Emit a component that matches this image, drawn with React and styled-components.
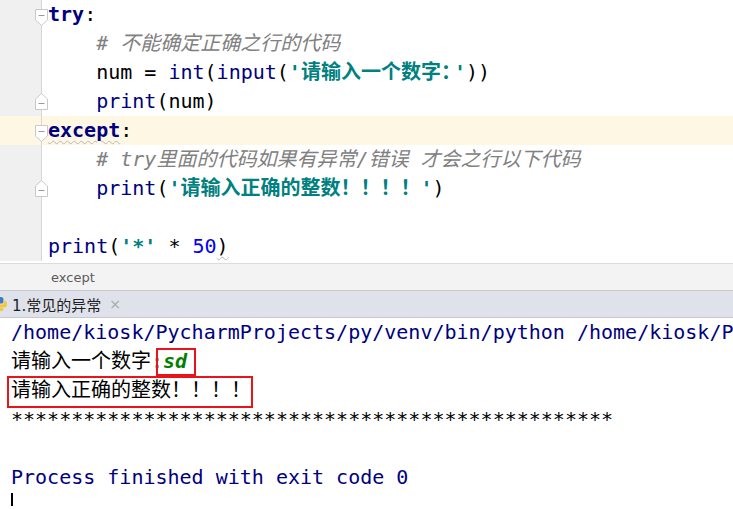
import React from "react";
import styled, { createGlobalStyle } from "styled-components";

const GlobalStyle = createGlobalStyle`
  html, body { margin: 0; padding: 0; background: #ffffff; overflow: hidden; }
  * { box-sizing: border-box; }
`;

const MONO = `"DejaVu Sans Mono", "Noto Sans CJK SC", monospace`;
const UI = `"DejaVu Sans", "Noto Sans CJK SC", sans-serif`;

const Page = styled.div`
  width: 733px;
  height: 509px;
  display: flex;
  flex-direction: column;
  overflow: hidden;
  background: #fff;
`;

const Editor = styled.div`
  height: 263px;
  display: flex;
  flex-direction: column;
  flex: none;
`;

const Row = styled.div`
  display: flex;
  height: 29px;
  background: ${(p) => (p.$active ? "#fdf7e3" : "transparent")};
`;

const Gutter = styled.div`
  width: 42px;
  flex: none;
  position: relative;
  background: ${(p) => (p.$active ? "#fdf7e3" : "#f0f0f0")};
  border-right: 1px solid #d6d6d6;
`;

const Code = styled.div`
  padding-left: 6px;
  font-family: ${MONO};
  font-size: 20px;
  line-height: 29px;
  white-space: pre;
  color: #000;
`;

const Kw = styled.span`
  color: #000080;
  font-weight: bold;
`;
const Squiggle = styled.span`
  text-decoration: underline wavy #b8b8b8 1px;
  text-underline-offset: 3px;
`;
const Builtin = styled.span`
  color: #000080;
`;
const Str = styled.span`
  color: #008080;
  font-weight: bold;
`;
const Narrow = styled.span`
  letter-spacing: -7px;
`;
const Num = styled.span`
  color: #0000ff;
`;
const Comment = styled.span`
  color: #808080;
  font-style: italic;
`;

const Marker = styled.svg`
  position: absolute;
  right: -7px;
  top: ${(p) => p.$top}px;
`;

const FoldMarker = ({ end, top }) => (
  <Marker $top={top} width="13" height="17" viewBox="0 0 13 17">
    {end ? (
      <path d="M0.5 16.5 V6 L6.5 0.5 L12.5 6 V16.5 Z" fill="#fff" stroke="#c9c9c9" />
    ) : (
      <path d="M0.5 0.5 H12.5 V11 L6.5 16.5 L0.5 11 Z" fill="#fff" stroke="#c9c9c9" />
    )}
    <line x1="3.5" x2="9.5" y1={end ? 10.5 : 6.5} y2={end ? 10.5 : 6.5} stroke="#9a9a9a" />
  </Marker>
);

const Breadcrumb = styled.div`
  height: 28px;
  flex: none;
  background: #f3f3f3;
  border-top: 1px solid #dcdcdc;
  border-bottom: 1px solid #c9c9c9;
  display: flex;
  align-items: center;
  padding-left: 51px;
  font-family: ${UI};
  font-size: 13px;
  color: #5b5b5b;
`;

const TabBar = styled.div`
  height: 27px;
  flex: none;
  background: #dfe2ea;
  border-bottom: 1px solid #c6c8ce;
  display: flex;
  align-items: center;
`;

const PyIcon = styled.svg`
  margin-left: -8px;
  flex: none;
`;

const TabTitle = styled.span`
  margin-left: 4px;
  font-family: ${UI};
  font-size: 15px;
  color: #1e1e1e;
`;

const Close = styled.span`
  margin-left: 8px;
  font-family: ${UI};
  font-size: 14px;
  color: #a8a8a8;
`;

const Console = styled.div`
  flex: 1;
  padding-left: 11px;
  font-family: ${MONO};
  font-size: 20px;
  line-height: 29px;
  white-space: pre;
  color: #000;
`;

const Line = styled.div`
  height: 29px;
  color: ${(p) => (p.$system ? "#000080" : "#000")};
`;

const Boxed = styled.span`
  position: relative;
  &::after {
    content: "";
    position: absolute;
    left: ${(p) => p.$l}px;
    right: ${(p) => p.$r}px;
    top: ${(p) => p.$t}px;
    bottom: ${(p) => p.$b}px;
    border: 2px solid #e8141a;
  }
`;

const Input = styled.span`
  color: #008000;
  font-style: italic;
  font-weight: bold;
`;

const Caret = styled.div`
  width: 2px;
  height: 13px;
  margin-top: 1px;
  background: #000;
`;

export default function App() {
  return (
    <Page>
      <GlobalStyle />
      <Editor>
        <Row>
          <Gutter><FoldMarker top={9} /></Gutter>
          <Code><Kw>try</Kw>:</Code>
        </Row>
        <Row>
          <Gutter />
          <Code>{"    "}<Comment># 不能确定正确之行的代码</Comment></Code>
        </Row>
        <Row>
          <Gutter />
          <Code>{"    num = "}<Builtin>int</Builtin>(<Builtin>input</Builtin>(<Str>'请输入一个数字<Narrow>：</Narrow>'</Str>))</Code>
        </Row>
        <Row>
          <Gutter><FoldMarker end top={6} /></Gutter>
          <Code>{"    "}<Builtin>print</Builtin>(num)</Code>
        </Row>
        <Row $active>
          <Gutter $active><FoldMarker top={9} /></Gutter>
          <Code><Kw><Squiggle>except</Squiggle></Kw>:</Code>
        </Row>
        <Row>
          <Gutter />
          <Code>{"    "}<Comment># try里面的代码如果有异常/错误 才会之行以下代码</Comment></Code>
        </Row>
        <Row>
          <Gutter><FoldMarker end top={6} /></Gutter>
          <Code>{"    "}<Builtin>print</Builtin>(<Str>'请输入正确的整数！！！！'</Str>)</Code>
        </Row>
        <Row>
          <Gutter />
          <Code> </Code>
        </Row>
        <Row>
          <Gutter />
          <Code><Builtin>print</Builtin>(<Str>'*'</Str> * <Num>50</Num><Squiggle>)</Squiggle></Code>
        </Row>
      </Editor>
      <Breadcrumb>except</Breadcrumb>
      <TabBar>
        <PyIcon width="16" height="16" viewBox="0 0 16 16">
          <path d="M7.8 1C4.5 1 4.7 2.4 4.7 2.4V4h3.2v.6H3.3S1 4.3 1 7.9s2 3.4 2 3.4h1.2V9.6s-.1-2 2-2h3.3s1.9 0 1.9-1.9V2.9S11.7 1 7.8 1z" fill="#3f7cbf" />
          <path d="M8.2 15c3.3 0 3.1-1.4 3.1-1.4V12H8.1v-.6h4.6S15 11.7 15 8.1s-2-3.4-2-3.4h-1.2v1.7s.1 2-2 2H6.5s-1.9 0-1.9 1.9v2.8S4.3 15 8.2 15z" fill="#f5c73a" />
        </PyIcon>
        <TabTitle>1.常见的异常</TabTitle>
        <Close>×</Close>
      </TabBar>
      <Console>
        <Line $system>/home/kiosk/PycharmProjects/py/venv/bin/python /home/kiosk/P</Line>
        <Line>请输入一个数字:<Boxed $l={-7} $r={-9} $t={-1} $b={-3}><Input>sd</Input></Boxed></Line>
        <Line><Boxed $l={-4} $r={-2} $t={-2} $b={-6}>请输入正确的整数！！！！</Boxed></Line>
        <Line>{"*".repeat(50)}</Line>
        <Line> </Line>
        <Line $system>Process finished with exit code 0</Line>
        <Caret />
      </Console>
    </Page>
  );
}
